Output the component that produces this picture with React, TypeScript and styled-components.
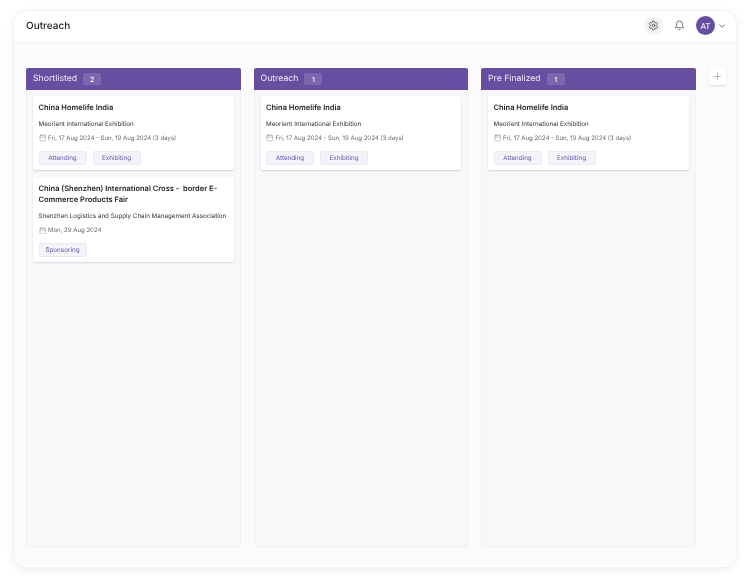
import React from 'react';
import styled, { createGlobalStyle } from 'styled-components';
import { Bell, Calendar, ChevronDown, Plus, Settings } from 'lucide-react';

const GlobalStyle = createGlobalStyle`
  * {
    margin: 0;
    padding: 0;
    box-sizing: border-box;
  }

  body {
    font-family: Inter, "Liberation Sans", sans-serif;
    background: #ffffff;
    color: #1d1d22;
    text-rendering: geometricPrecision;
  }
`;

const Page = styled.div`
  width: 750px;
  height: 583px;
  padding: 10px 13px 15px;
  overflow: hidden;
`;

const Frame = styled.div`
  height: 100%;
  display: flex;
  flex-direction: column;
  background: #fbfbfc;
  border-radius: 14px;
  border: 1px solid #f2f2f4;
  box-shadow: 0 2px 9px rgba(30, 30, 50, 0.07), inset 0 -2px 0 #ffffff;
  overflow: hidden;
  will-change: transform;
`;

const Header = styled.header`
  height: 32px;
  flex: none;
  display: flex;
  align-items: center;
  justify-content: space-between;
  padding: 0 9px 2px 12px;
  background: #ffffff;
  border-bottom: 1px solid #f2f2f4;
`;

const Title = styled.h1`
  font-size: 10px;
  font-weight: 500;
  color: #222228;
`;

const Actions = styled.div`
  display: flex;
  align-items: center;
`;

const IconButton = styled.button<{ $filled?: boolean }>`
  width: 19px;
  height: 19px;
  display: flex;
  align-items: center;
  justify-content: center;
  border: none;
  border-radius: 50%;
  margin-right: 7px;
  color: #34343a;
  background: ${props => (props.$filled ? '#f3f3f4' : 'transparent')};
`;

const Avatar = styled.div`
  width: 19px;
  height: 19px;
  display: flex;
  align-items: center;
  justify-content: center;
  border-radius: 50%;
  background: #674ea0;
  color: #f3f0fa;
  font-size: 8px;
  font-weight: 500;
`;

const Chevron = styled(ChevronDown)`
  margin-left: 2px;
  color: #3a3a40;
`;

const Board = styled.main`
  flex: 1;
  min-height: 0;
  display: flex;
  align-items: stretch;
  gap: 13px;
  padding: 25px 12px 20px;
`;

const Column = styled.section`
  width: 214.5px;
  flex: none;
  display: flex;
  flex-direction: column;
  background: #f8f8fb;
  border: 1px solid #f1f1f7;
  border-top: none;
  border-radius: 2px;
`;

const ColumnHeader = styled.div`
  height: 22px;
  flex: none;
  margin: 0 -1px;
  display: flex;
  align-items: center;
  padding: 0 7px;
  border-radius: 2px 2px 0 0;
  background: #674ea0;
  color: #f1eef8;
  font-size: 8.7px;
  font-weight: 400;
`;

const Count = styled.span`
  width: 18px;
  height: 12px;
  margin-left: 6px;
  display: flex;
  align-items: center;
  justify-content: center;
  border-radius: 2px;
  background: #7c66ae;
  color: #ffffff;
  font-size: 7px;
  font-weight: 500;
`;

const CardList = styled.div`
  display: flex;
  flex-direction: column;
  gap: 8px;
  padding: 6px 6px 0;
`;

const Card = styled.article`
  padding: 5.5px 5.5px 5px;
  background: #ffffff;
  border-radius: 2px;
  box-shadow: 0 1px 2px rgba(30, 30, 60, 0.16);
`;

const CardTitle = styled.h2`
  font-size: 7.5px;
  line-height: 11px;
  font-weight: 600;
  color: #25252b;
`;

const Organizer = styled.p`
  margin-top: 7px;
  font-size: 6.25px;
  line-height: 9px;
  color: #333339;
  white-space: nowrap;
`;

const DateRow = styled.div`
  margin-top: 5px;
  display: flex;
  align-items: center;
  gap: 2px;
  font-size: 6.05px;
  line-height: 9px;
  color: #6b6b73;
`;

const Tags = styled.div`
  margin-top: 8px;
  display: flex;
  gap: 6px;
`;

const Tag = styled.span`
  width: 48px;
  height: 14px;
  display: flex;
  align-items: center;
  justify-content: center;
  border-radius: 2px;
  border: 1px solid #ebe9f4;
  background: #f4f3fa;
  color: #6a54a6;
  font-size: 6.3px;
`;

const AddButton = styled.button`
  width: 17px;
  height: 17px;
  flex: none;
  display: flex;
  align-items: center;
  justify-content: center;
  border: none;
  border-radius: 2px;
  background: #ffffff;
  color: #8d8d95;
  box-shadow: 0 1px 2px rgba(30, 30, 60, 0.14);
`;

interface EventCard {
  title: string;
  organizer: string;
  date: string;
  tags: string[];
}

const homelife: EventCard = {
  title: 'China Homelife India',
  organizer: 'Meorient International Exhibition',
  date: 'Fri, 17 Aug 2024 - Sun, 19 Aug 2024 (3 days)',
  tags: ['Attending', 'Exhibiting']
};

const columns: { name: string; cards: EventCard[] }[] = [
  {
    name: 'Shortlisted',
    cards: [
      homelife,
      {
        title: 'China (Shenzhen) International Cross -\u00a0 border E-Commerce Products Fair',
        organizer: 'Shenzhen Logistics and Supply Chain Management Association',
        date: 'Mon, 29 Aug 2024',
        tags: ['Sponsoring']
      }
    ]
  },
  { name: 'Outreach', cards: [homelife] },
  { name: 'Pre Finalized', cards: [homelife] }
];

const App: React.FC = () => (
  <>
    <GlobalStyle />
    <Page>
      <Frame>
        <Header>
          <Title>Outreach</Title>
          <Actions>
            <IconButton $filled aria-label="Settings">
              <Settings size={11} strokeWidth={1.5} />
            </IconButton>
            <IconButton aria-label="Notifications">
              <Bell size={11} strokeWidth={1.5} />
            </IconButton>
            <Avatar>AT</Avatar>
            <Chevron size={10} strokeWidth={1.7} />
          </Actions>
        </Header>
        <Board>
          {columns.map(column => (
            <Column key={column.name}>
              <ColumnHeader>
                {column.name}
                <Count>{column.cards.length}</Count>
              </ColumnHeader>
              <CardList>
                {column.cards.map(card => (
                  <Card key={card.title}>
                    <CardTitle>{card.title}</CardTitle>
                    <Organizer>{card.organizer}</Organizer>
                    <DateRow>
                      <Calendar size={7.5} strokeWidth={1.2} />
                      {card.date}
                    </DateRow>
                    <Tags>
                      {card.tags.map(tag => (
                        <Tag key={tag}>{tag}</Tag>
                      ))}
                    </Tags>
                  </Card>
                ))}
              </CardList>
            </Column>
          ))}
          <AddButton aria-label="Add column">
            <Plus size={11} strokeWidth={1.3} />
          </AddButton>
        </Board>
      </Frame>
    </Page>
  </>
);

export default App;
